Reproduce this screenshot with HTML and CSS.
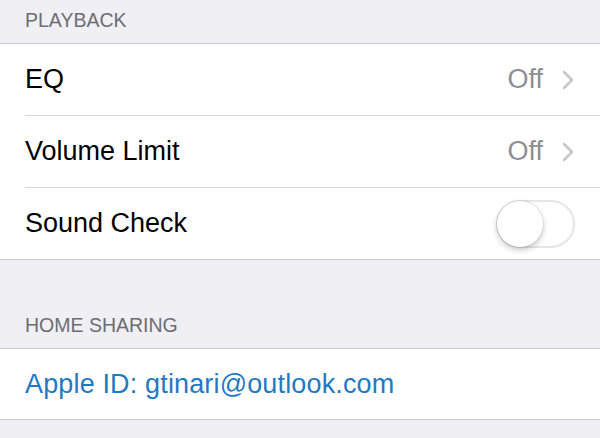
FILE: index.html
```html
<!DOCTYPE html>
<html>
<head>
<meta charset="utf-8">
<link rel="stylesheet" href="styles.css">
</head>
<body>
<div class="header first">PLAYBACK</div>
<div class="group">
  <div class="row">
    <span class="label">EQ</span>
    <span class="detail">Off</span>
    <svg class="chev" width="12" height="20" viewBox="0 0 12 20"><polyline points="2,2 10,10 2,18" fill="none" stroke="#c7c7cc" stroke-width="2.6" stroke-linecap="round" stroke-linejoin="round"/></svg>
  </div>
  <div class="row">
    <span class="label">Volume Limit</span>
    <span class="detail">Off</span>
    <svg class="chev" width="12" height="20" viewBox="0 0 12 20"><polyline points="2,2 10,10 2,18" fill="none" stroke="#c7c7cc" stroke-width="2.6" stroke-linecap="round" stroke-linejoin="round"/></svg>
  </div>
  <div class="row">
    <span class="label">Sound Check</span>
    <span class="toggle"><span class="knob"></span></span>
  </div>
</div>
<div class="header second">HOME SHARING</div>
<div class="group">
  <div class="row short">
    <span class="label link">Apple ID: gtinari@outlook.com</span>
  </div>
</div>
</body>
</html>
```

FILE: styles.css
```css
html, body {
  margin: 0;
  padding: 0;
  background: #efeff4;
  font-family: "Liberation Sans", Arial, sans-serif;
}
.header {
  box-sizing: border-box;
  display: flex;
  align-items: flex-end;
  padding: 0 25px 13px;
  font-size: 19.5px;
  line-height: 20px;
  color: #6d6d72;
}
.header.first { height: 43px; }
.header.second { height: 88px; }
.group {
  background: #fff;
  border-top: 1px solid #c8c7cc;
  border-bottom: 1px solid #c8c7cc;
}
.row {
  height: 71px;
  display: flex;
  align-items: center;
  margin-left: 25px;
  padding-right: 25px;
  border-bottom: 1px solid #d6d6da;
}
.row:last-child { border-bottom: none; }
.row.short { height: 70px; }
.label {
  flex: 1;
  font-size: 27px;
  color: #000;
}
.label.link {
  color: #1f7ac2;
  letter-spacing: 0.15px;
}
.detail {
  font-size: 27px;
  color: #8e8e93;
  margin-right: 19px;
}
.chev { display: block; margin-right: 1px; }
.toggle {
  position: relative;
  box-sizing: border-box;
  width: 79px;
  height: 48px;
  border-radius: 24px;
  border: 2px solid #e5e5ea;
  background: #fff;
}
.knob {
  position: absolute;
  left: -1px;
  top: -1px;
  width: 46px;
  height: 46px;
  border-radius: 50%;
  background: #fff;
  box-shadow: 0 3px 6px rgba(0,0,0,0.22), 0 0 0 1px rgba(0,0,0,0.06);
}
```
